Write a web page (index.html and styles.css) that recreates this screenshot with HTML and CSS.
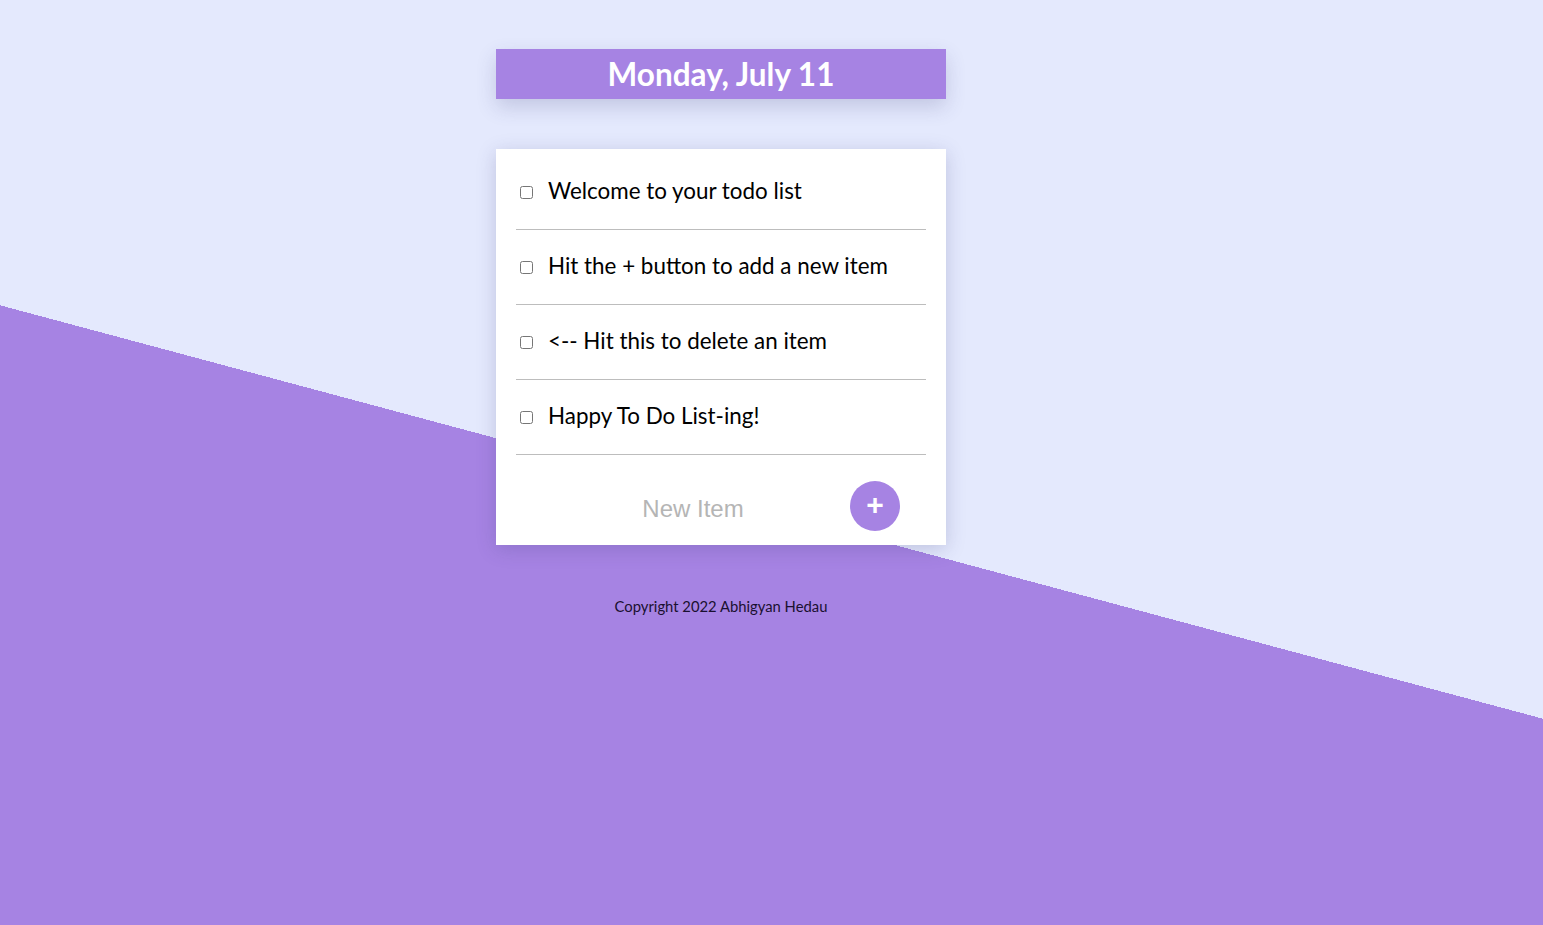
FILE: index.html
```html
<!DOCTYPE html>
<html lang="en">
<head>
<meta charset="utf-8">
<title>To Do List</title>
<link rel="stylesheet" href="styles.css">
</head>
<body>
<div class="page">
  <div class="heading">
    <h1>Monday, July 11</h1>
  </div>
  <div class="box">
    <div class="item"><input type="checkbox"><p>Welcome to your todo list</p></div>
    <div class="item"><input type="checkbox"><p>Hit the + button to add a new item</p></div>
    <div class="item"><input type="checkbox"><p>&lt;-- Hit this to delete an item</p></div>
    <div class="item"><input type="checkbox"><p>Happy To Do List-ing!</p></div>
    <form class="new-form">
      <input class="new-input" type="text" placeholder="New Item" autocomplete="off">
      <button class="add-btn" type="button">+</button>
    </form>
  </div>
  <footer class="footer">Copyright 2022 Abhigyan Hedau</footer>
</div>
</body>
</html>
```
FILE: styles.css
```css
html {
  background-color: #E4E9FD;
  background-image: linear-gradient(15deg, #A683E3 50%, #E4E9FD 50%);
  background-repeat: no-repeat;
  background-size: 100% 1024px;
}
body {
  margin: 0;
  font-family: Lato, "Noto Sans", sans-serif;
}
.page {
  width: 450px;
  margin: 49px 0 0 496px;
}
.heading {
  background-color: #A683E3;
  height: 50px;
  display: flex;
  align-items: center;
  justify-content: center;
  box-shadow: 0 8px 20px rgba(60, 60, 120, 0.2);
}
.heading h1 {
  margin: 1px 0 0 0;
  color: #fff;
  font-size: 31.5px;
  font-weight: 700;
  line-height: 1;
}
.box {
  margin-top: 50px;
  background: #fff;
  padding-top: 6px;
  box-shadow: 0 4px 18px rgba(60, 60, 120, 0.22);
}
.item {
  margin: 0 20px;
  height: 74px;
  border-bottom: 1px solid #bdbdbd;
  display: flex;
  align-items: center;
}
.item input {
  margin: 3px 3px 3px 4px;
  width: 13px;
  height: 13px;
}
.item p {
  margin: 0;
  padding: 0 0 3px 12px;
  font-size: 22.4px;
  color: #000;
}
.new-form {
  display: flex;
  align-items: center;
  padding: 26px 46px 14px 40px;
  margin: 0;
}
.new-input {
  flex: 1;
  min-width: 0;
  box-sizing: border-box;
  height: 50px;
  border: none;
  background: transparent;
  text-align: center;
  font-family: "Liberation Sans", Arial, sans-serif;
  font-size: 24px;
  padding: 6px 0 0 0;
  outline: none;
}
.new-input::placeholder {
  color: #b5b5b5;
}
.add-btn {
  width: 50px;
  height: 50px;
  border-radius: 50%;
  border: 0;
  padding: 0 0 3px 0;
  background: #A683E3;
  color: #fff;
  font-family: "Liberation Sans", Arial, sans-serif;
  font-size: 30px;
  font-weight: 700;
  line-height: 1;
}
.footer {
  margin-top: 52px;
  text-align: center;
  font-size: 14.8px;
  color: #1a1030;
}
```
